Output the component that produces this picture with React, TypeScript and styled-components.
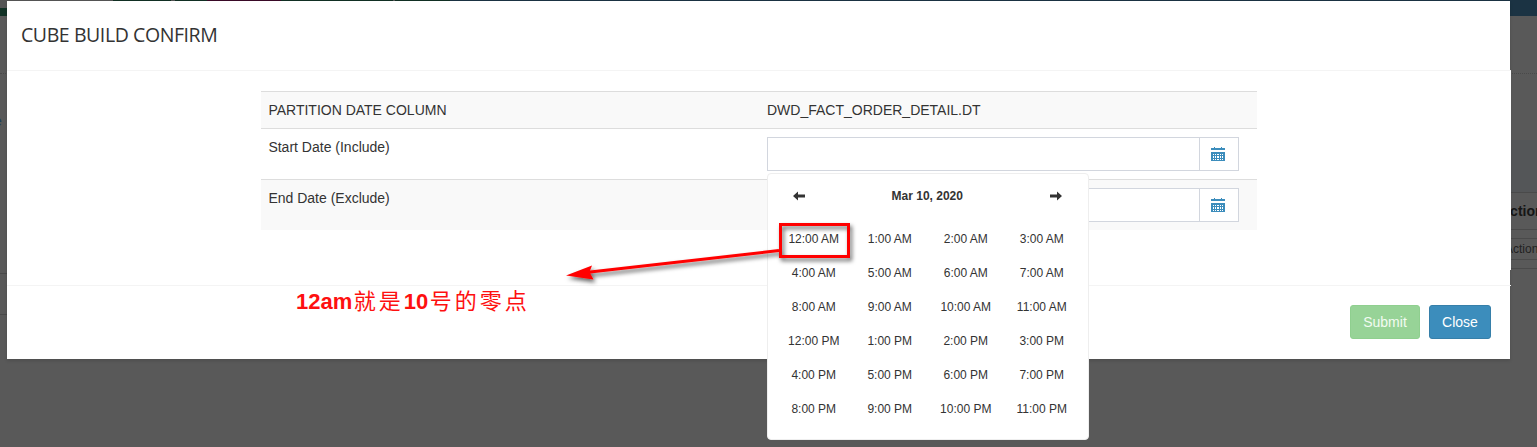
import React from "react";
import styled, { createGlobalStyle } from "styled-components";

const GlobalStyle = createGlobalStyle`
  * { box-sizing: border-box; }
  html, body { margin: 0; padding: 0; }
  body {
    background: #595959;
    color: #333;
    font: 14px/20px "Liberation Sans", Arial, sans-serif;
    overflow: hidden;
  }
`;

const Screen = styled.div`
  position: relative;
  height: 447px;
  overflow: hidden;
  background: #595959;
`;

const Backdrop = styled.div`
  position: absolute;
  inset: 0;
  display: flex;
  flex-direction: column;
`;

const TopStrip = styled.div`
  display: flex;
  height: 16px;
  flex: none;
`;

const Segment = styled.div<{ $w?: number; $color: string }>`
  flex: ${(p) => (p.$w ? `0 0 ${p.$w}px` : "1")};
  background: ${(p) => p.$color};
`;

const BrandSegment = styled(Segment)`
  border-bottom: 8px solid #123226;
`;

const BackPage = styled.div`
  flex: 1;
  display: flex;
  justify-content: space-between;
`;

const LeftEdge = styled.div`
  width: 8px;
  padding-top: 57px;
`;

const EdgeRule = styled.div<{ $gap?: number; $dotted?: boolean }>`
  height: 1px;
  margin-top: ${(p) => p.$gap || 0}px;
  border-top: 1px ${(p) => (p.$dotted ? "dotted" : "solid")} #4a4a4a;
`;

const EdgeLink = styled.div`
  margin-top: 37px;
  height: 20px;
  text-indent: -6px;
  color: #1d4058;
`;

const RightEdge = styled.div`
  width: 29px;
  padding-top: 57px;
`;

const EdgeBand = styled.div`
  margin-top: 66px;
  height: 52px;
  background: #545658;
`;

const EdgeHeading = styled.div`
  height: 36px;
  line-height: 37px;
  font-weight: 700;
  color: #161616;
  white-space: nowrap;
  text-indent: -8px;
`;

const EdgeButton = styled.div`
  margin-top: 8px;
  height: 22px;
  border: solid #4a4a4a;
  border-width: 1px 0;
  white-space: nowrap;
  font-size: 12px;
  line-height: 20px;
  color: #222;
  text-indent: -3px;
`;

const Dialog = styled.section`
  position: relative;
  width: 1503px;
  height: 358px;
  margin: 1px 0 0 7px;
  background: #fff;
  box-shadow: 0 2px 3px rgba(0, 0, 0, 0.13);
`;

const DialogHeader = styled.header`
  height: 69px;
  padding: 22px 0 0 14px;
`;

const Title = styled.h4`
  margin: 0;
  font: 400 19.5px/24px "Open Sans", "Noto Sans", sans-serif;
  letter-spacing: -0.42px;
  white-space: nowrap;
`;

const DialogBody = styled.div`
  width: 1504px;
  height: 200px;
  padding: 20px 254px 0;
  border-top: 1px solid #f4f4f4;
  background: #fff;
`;

const DialogFooter = styled.footer`
  width: 1504px;
  margin-top: 15px;
  padding: 19px 20px 0 0;
  border-top: 1px solid #f4f4f4;
  display: flex;
  justify-content: flex-end;
  gap: 9px;
`;

const Button = styled.button<{ $variant: "submit" | "close" }>`
  width: ${(p) => (p.$variant === "submit" ? 70 : 62)}px;
  height: 34px;
  padding: 0;
  border: 1px solid ${(p) => (p.$variant === "submit" ? "#8fcf8f" : "#367fa9")};
  border-radius: 3px;
  background: ${(p) => (p.$variant === "submit" ? "#97d397" : "#3c8dbc")};
  color: ${(p) => (p.$variant === "submit" ? "#f2fbf2" : "#fff")};
  font: 14px/20px "Liberation Sans", Arial, sans-serif;
`;

const Row = styled.div<{ $striped?: boolean }>`
  display: grid;
  grid-template-columns: 498px 498px;
  border-top: 1px solid #ddd;
  background: ${(p) => (p.$striped ? "#f9f9f9" : "#fff")};
`;

const Cell = styled.div`
  padding: 8px;
`;

const LabelCell = styled(Cell)`
  padding-left: 7.4px;
`;

const DateField = styled.div`
  display: flex;
  width: 472px;
  height: 34px;
  border: 1px solid #d2d6de;
  background: #fff;
`;

const DateInput = styled.input`
  flex: 1;
  min-width: 0;
  border: 0;
  padding: 6px 12px;
  outline: 0;
  background: transparent;
`;

const DateAddon = styled.span`
  width: 39px;
  border-left: 1px solid #d2d6de;
  padding: 9px 0 0 11px;
  line-height: 0;
`;

const Picker = styled.div`
  position: absolute;
  left: 767px;
  top: 173px;
  width: 322px;
  height: 267px;
  padding: 8px;
  border: 1px solid #eee;
  border-radius: 4px;
  background: #fff;
  font-size: 12px;
`;

const PickerHead = styled.div`
  display: flex;
  justify-content: space-between;
  align-items: center;
  height: 28px;
  margin-bottom: 12px;
  padding: 0 18px 0 16.5px;
  font-weight: 700;
`;

const HourGrid = styled.div`
  display: grid;
  grid-template-columns: repeat(4, 76px);
  grid-auto-rows: 34px;
`;

const Hour = styled.div`
  line-height: 34px;
  text-align: center;
  padding-right: 0.5px;
`;

const Annotation = styled.svg`
  position: absolute;
  left: 0;
  top: 0;
  pointer-events: none;
`;

const Note = styled.div`
  position: absolute;
  left: 296px;
  top: 283px;
  display: flex;
  align-items: baseline;
  color: #fe1010;
  font-size: 22px;
  line-height: 32px;
  white-space: nowrap;
`;

const NoteLatin = styled.span`
  font-weight: 700;
  margin-right: 1.5px;
`;

const NoteHan = styled.span`
  font-family: "Noto Sans CJK SC", sans-serif;
  font-weight: 400;
  letter-spacing: 3px;
`;

const CalendarIcon = () => (
  <svg width="14" height="14" viewBox="0 0 14 14" shapeRendering="crispEdges">
    <path d="M3 0h1v1h6V0h1v1h3v2H0V1h3z" fill="#3c8dbc" />
    <path d="M0 5h14v9H0z" fill="#3c8dbc" />
    {[7, 9, 12].map((y) =>
      [2, 4, 6, 9, 11].map((x) => (
        <rect
          key={`${x}-${y}`}
          x={x}
          y={y}
          width={x === 6 ? 2 : 1}
          height={y === 9 ? 2 : 1}
          fill="#fff"
        />
      ))
    )}
  </svg>
);

const ArrowIcon = ({ right }: { right?: boolean }) => (
  <svg width="12" height="10" viewBox="0 0 12 10">
    <path
      d={right ? "M12 5 7 .6V3.5H0v3h7v2.9z" : "M0 5 5 .6V3.5h7v3H5v2.9z"}
      fill="#333"
    />
  </svg>
);

const hours = ["AM", "PM"].flatMap((half) =>
  [12, 1, 2, 3, 4, 5, 6, 7, 8, 9, 10, 11].map((h) => `${h}:00 ${half}`)
);

const DateRow = ({ label, striped }: { label: string; striped?: boolean }) => (
  <Row $striped={striped}>
    <LabelCell>{label}</LabelCell>
    <Cell>
      <DateField>
        <DateInput aria-label={label} />
        <DateAddon>
          <CalendarIcon />
        </DateAddon>
      </DateField>
    </Cell>
  </Row>
);

export default function App() {
  return (
    <Screen>
      <GlobalStyle />
      <Backdrop>
        <TopStrip>
          <BrandSegment $w={113} $color="#555" />
          <Segment $w={58} $color="#123024" />
          <Segment $w={4} $color="#555" />
          <Segment $w={32} $color="#123024" />
          <Segment $w={74} $color="#3a0a28" />
          <Segment $w={112} $color="#123024" />
          <Segment $w={2} $color="#555" />
          <Segment $w={55} $color="#123024" />
          <Segment $color="#1b3343" />
        </TopStrip>
        <BackPage>
          <LeftEdge>
            <EdgeRule $dotted />
            <EdgeLink>e</EdgeLink>
            <EdgeRule $gap={142} />
            <EdgeRule $gap={40} />
          </LeftEdge>
          <RightEdge>
            <EdgeRule $dotted />
            <EdgeBand />
            <EdgeRule />
            <EdgeHeading>Action</EdgeHeading>
            <EdgeRule />
            <EdgeButton>Action</EdgeButton>
            <EdgeRule $gap={8} />
          </RightEdge>
        </BackPage>
      </Backdrop>
      <Dialog>
        <DialogHeader>
          <Title>CUBE BUILD CONFIRM</Title>
        </DialogHeader>
        <DialogBody>
          <Row $striped>
            <LabelCell>PARTITION DATE COLUMN</LabelCell>
            <Cell>DWD_FACT_ORDER_DETAIL.DT</Cell>
          </Row>
          <DateRow label="Start Date (Include)" />
          <DateRow label="End Date (Exclude)" striped />
        </DialogBody>
        <DialogFooter>
          <Button $variant="submit">Submit</Button>
          <Button $variant="close">Close</Button>
        </DialogFooter>
      </Dialog>
      <Picker>
        <PickerHead>
          <ArrowIcon />
          <span>Mar 10, 2020</span>
          <ArrowIcon right />
        </PickerHead>
        <HourGrid>
          {hours.map((h) => (
            <Hour key={h}>{h}</Hour>
          ))}
        </HourGrid>
      </Picker>
      <Annotation width="1537" height="447">
        <defs>
          <filter id="shadow" x="-10%" y="-50%" width="120%" height="220%">
            <feDropShadow dx="2" dy="3" stdDeviation="2" floodColor="#000" floodOpacity="0.6" />
          </filter>
        </defs>
        <g filter="url(#shadow)">
          <rect x="780.5" y="224.5" width="68" height="32" fill="none" stroke="#f00" strokeWidth="3" />
          <path d="M779 250.5 L588 272.3" stroke="#f00" strokeWidth="3" />
          <path d="M566 275.5 L592 265.5 L589.5 272 L593.5 279.5 Z" fill="#f00" />
        </g>
      </Annotation>
      <Note>
        <NoteLatin>12am</NoteLatin>
        <NoteHan>就是</NoteHan>
        <NoteLatin>10</NoteLatin>
        <NoteHan>号的零点</NoteHan>
      </Note>
    </Screen>
  );
}
